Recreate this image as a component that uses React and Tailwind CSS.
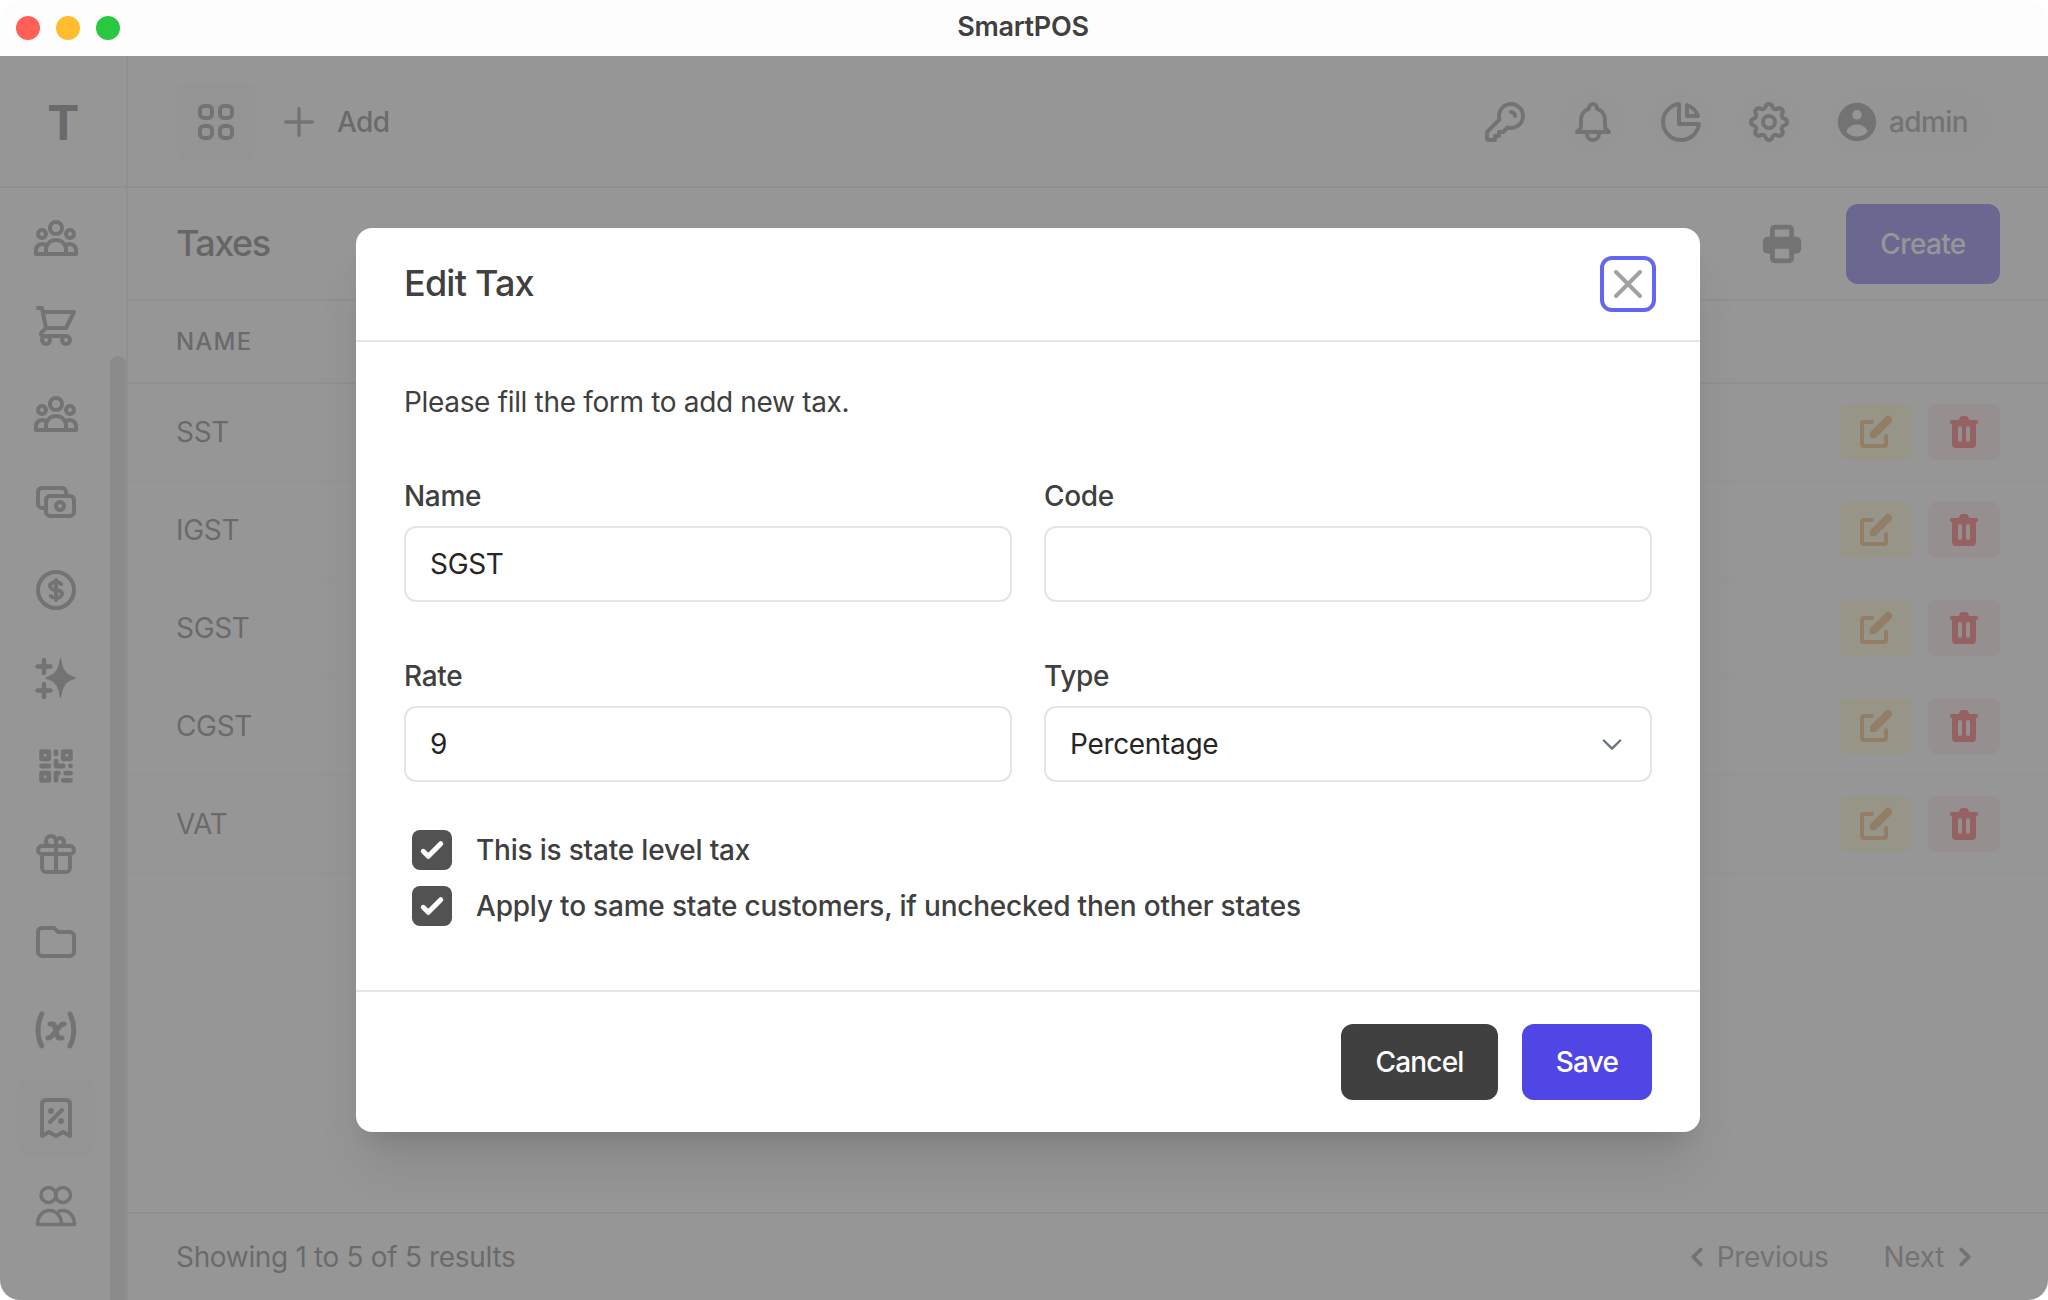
import {
  HiOutlineUserGroup,
  HiOutlineShoppingCart,
  HiOutlineCash,
  HiOutlineCurrencyDollar,
  HiQrcode,
  HiOutlineGift,
  HiOutlineFolder,
  HiOutlineVariable,
  HiOutlineReceiptTax,
  HiOutlineViewGrid,
  HiOutlinePlus,
  HiOutlineKey,
  HiOutlineBell,
  HiOutlineChartPie,
  HiOutlineCog,
  HiUserCircle,
  HiPrinter,
  HiPencilAlt,
  HiTrash,
  HiOutlineX,
  HiOutlineChevronDown,
  HiChevronLeft,
  HiChevronRight,
} from 'react-icons/hi';

const SparkIcon = ({ className }) => (
  <svg viewBox="0 0 48 48" fill="currentColor" className={className}>
    <path d="M28.5 5C30 16 33 21 43 24 33 27 30 32 28.5 43 27 32 24 27 14 24 24 21 27 16 28.5 5Z" strokeWidth="1.5" stroke="currentColor" strokeLinejoin="round" />
    <path d="M12 6v13M5.5 12.5h13M12 30v13M5.5 36.5h13" stroke="currentColor" strokeWidth="4.5" strokeLinecap="round" />
  </svg>
);

const TeamIcon = ({ className }) => (
  <svg viewBox="0 0 48 48" fill="none" stroke="currentColor" strokeWidth="3.5" strokeLinejoin="round" className={className}>
    <circle cx="16.5" cy="13" r="7.5" />
    <circle cx="31" cy="13" r="7.5" />
    <path d="M5.5 42.5c0-8 5-14 12-14s12 6 12 14z" />
    <path d="M26 29.5c1.5-.7 3-1 4.5-1 7 0 12 6 12 14H29.5" />
  </svg>
);

const navItems = [
  { icon: HiOutlineUserGroup },
  { icon: HiOutlineShoppingCart },
  { icon: HiOutlineUserGroup },
  { icon: HiOutlineCash },
  { icon: HiOutlineCurrencyDollar },
  { icon: SparkIcon },
  { icon: HiQrcode },
  { icon: HiOutlineGift },
  { icon: HiOutlineFolder },
  { icon: HiOutlineVariable, heavy: true },
  { icon: HiOutlineReceiptTax, active: true },
  { icon: TeamIcon },
];

const taxes = ['SST', 'IGST', 'SGST', 'CGST', 'VAT'];

const Sidebar = () => (
  <aside className="relative flex w-[128px] shrink-0 flex-col border-r-2 border-neutral-200">
    <div className="flex h-[132px] items-center justify-center border-b-2 border-neutral-200 pt-[4px] text-[48px] font-bold text-neutral-600">
      T
    </div>
    <nav className="flex flex-col items-center pt-[6px] pr-[14px]">
      {navItems.map((item, i) => (
        <div key={i} className="flex h-[88px] items-center justify-center">
          <div
            className={`flex h-[78px] w-[78px] items-center justify-center rounded-xl ${
              item.active ? 'bg-neutral-100' : ''
            }`}
          >
            <item.icon
              className={`h-[48px] w-[48px] text-neutral-500 ${item.heavy ? '[&_path]:[stroke-width:2.5]' : ''}`}
            />
          </div>
        </div>
      ))}
    </nav>
    <div className="absolute top-[300px] right-0 bottom-0 w-[16px] rounded-t-full bg-neutral-300" />
  </aside>
);

const Topbar = () => (
  <header className="flex h-[132px] shrink-0 items-center justify-between border-b-2 border-neutral-200 pt-[2px] pr-[56px] pl-[48px]">
    <div className="flex items-center">
      <div className="flex h-[78px] w-[80px] items-center justify-center rounded-xl bg-neutral-100">
        <HiOutlineViewGrid className="h-[48px] w-[48px] text-neutral-500" />
      </div>
      <HiOutlinePlus className="ml-[23px] h-[40px] w-[40px] text-neutral-500" />
      <span className="ml-[18px] text-[28px] font-medium tracking-[-0.6px] text-neutral-600">Add</span>
    </div>
    <div className="flex items-center gap-[24px]">
      <span className="flex h-[64px] w-[64px] items-center justify-center">
        <HiOutlineKey className="h-[48px] w-[48px] text-neutral-500" />
      </span>
      <span className="flex h-[64px] w-[64px] items-center justify-center rounded-full bg-neutral-50">
        <HiOutlineBell className="h-[48px] w-[48px] text-neutral-500" />
      </span>
      <span className="flex h-[64px] w-[64px] items-center justify-center rounded-full bg-neutral-50">
        <HiOutlineChartPie className="h-[48px] w-[48px] text-neutral-500" />
      </span>
      <span className="flex h-[64px] w-[64px] items-center justify-center rounded-full bg-neutral-50">
        <HiOutlineCog className="h-[48px] w-[48px] text-neutral-500" />
      </span>
      <div className="ml-[2px] flex h-[64px] items-center gap-[8px] rounded-full bg-neutral-50 pr-[24px] pl-[6px]">
        <HiUserCircle className="h-[48px] w-[48px] text-neutral-500" />
        <span className="text-[28px] font-medium tracking-[-0.6px] text-neutral-500">admin</span>
      </div>
    </div>
  </header>
);

const TaxTable = () => (
  <div className="flex min-h-0 flex-1 flex-col">
    <div className="flex h-[113px] shrink-0 items-center justify-between border-b-2 border-neutral-200 px-[48px]">
      <h1 className="pb-[2px] text-[36px] font-medium tracking-[-1.5px] text-neutral-700">Taxes</h1>
      <div className="flex items-center gap-[40px]">
        <HiPrinter className="h-[48px] w-[48px] text-neutral-500" />
        <button className="h-[80px] w-[154px] rounded-xl bg-[#4f46e5] text-[28px] font-medium tracking-[-0.65px] text-white">
          Create
        </button>
      </div>
    </div>
    <div className="flex h-[83px] shrink-0 items-center border-b-2 border-neutral-200 pl-[48px] text-[24px] font-medium tracking-wider text-neutral-600">
      NAME
    </div>
    {taxes.map((name) => (
      <div
        key={name}
        className="flex h-[98px] shrink-0 items-center justify-between border-b-2 border-neutral-100 px-[48px]"
      >
        <span className="text-[28px] text-neutral-600">{name}</span>
        <div className="flex gap-[16px]">
          <button className="flex h-[56px] w-[72px] items-center justify-center rounded-lg bg-yellow-100">
            <HiPencilAlt className="h-[40px] w-[40px] text-[#f0a040]" />
          </button>
          <button className="flex h-[56px] w-[72px] items-center justify-center rounded-lg bg-red-100">
            <HiTrash className="h-[40px] w-[40px] text-red-500" />
          </button>
        </div>
      </div>
    ))}
    <footer className="mt-auto flex h-[88px] shrink-0 items-center justify-between border-t-2 border-neutral-200 pr-[64px] pl-[48px]">
      <span className="text-[28px] text-neutral-600">Showing 1 to 5 of 5 results</span>
      <div className="flex items-center text-[28px] text-neutral-500">
        <HiChevronLeft className="h-[38px] w-[38px]" />
        <span className="ml-[1px]">Previous</span>
        <span className="ml-[55px]">Next</span>
        <HiChevronRight className="ml-[2px] h-[38px] w-[38px]" />
      </div>
    </footer>
  </div>
);

const Field = ({ label, children }) => (
  <div>
    <label className="mb-[10px] block text-[28px] leading-[40px] font-medium text-neutral-700">{label}</label>
    {children}
  </div>
);

const TextBox = ({ value }) => (
  <div className="flex h-[76px] items-center rounded-xl border-2 border-neutral-200 px-[24px] text-[28px] text-neutral-800">
    {value}
  </div>
);

const Check = ({ label }) => (
  <div className="flex h-[40px] items-center">
    <span className="ml-[8px] flex h-[40px] w-[40px] items-center justify-center rounded-lg bg-neutral-600">
      <svg viewBox="0 0 16 16" fill="white" className="h-[40px] w-[40px]">
        <path d="M12.207 4.793a1 1 0 010 1.414l-5 5a1 1 0 01-1.414 0l-2-2a1 1 0 011.414-1.414L6.5 9.086l4.293-4.293a1 1 0 011.414 0z" />
      </svg>
    </span>
    <span className="ml-[24px] text-[28px] font-medium tracking-[-0.2px] text-neutral-700">{label}</span>
  </div>
);

const EditDialog = () => (
  <div className="absolute inset-0 bg-neutral-500/75 pt-[172px] pl-[356px]">
    <div className="flex h-[904px] w-[1344px] flex-col rounded-2xl bg-white shadow-[0_40px_50px_-10px_rgba(0,0,0,0.1),0_16px_20px_-12px_rgba(0,0,0,0.1)]">
      <div className="flex h-[114px] shrink-0 items-center justify-between border-b-2 border-neutral-200 pr-[44px] pl-[48px]">
        <h2 className="pb-[2px] text-[36px] font-medium tracking-[-0.8px] text-neutral-700">Edit Tax</h2>
        <button className="flex h-[56px] w-[56px] items-center justify-center rounded-xl border-4 border-[#6366f1] text-neutral-400">
          <HiOutlineX className="h-[48px] w-[48px]" />
        </button>
      </div>
      <div className="flex-1 px-[48px] pt-[40px]">
        <p className="text-[28px] leading-[40px] text-neutral-700">Please fill the form to add new tax.</p>
        <div className="mt-[54px] grid grid-cols-2 gap-x-[32px] gap-y-[54px]">
          <Field label="Name">
            <TextBox value="SGST" />
          </Field>
          <Field label="Code">
            <TextBox value="" />
          </Field>
          <Field label="Rate">
            <TextBox value="9" />
          </Field>
          <Field label="Type">
            <div className="flex h-[76px] items-center justify-between rounded-xl border-2 border-neutral-200 px-[24px] text-[28px] text-neutral-800">
              Percentage
              <HiOutlineChevronDown className="h-[28px] w-[28px] text-gray-500" />
            </div>
          </Field>
        </div>
        <div className="mt-[48px] flex flex-col gap-[16px]">
          <Check label="This is state level tax" />
          <Check label="Apply to same state customers, if unchecked then other states" />
        </div>
      </div>
      <div className="flex h-[142px] shrink-0 items-center justify-end gap-[24px] border-t-2 border-neutral-200 px-[48px]">
        <button className="h-[76px] w-[157px] rounded-xl bg-neutral-700 text-[28px] font-medium tracking-[-0.8px] text-white">
          Cancel
        </button>
        <button className="h-[76px] w-[130px] rounded-xl bg-[#4f46e5] text-[28px] font-medium tracking-[-0.8px] text-white">
          Save
        </button>
      </div>
    </div>
  </div>
);

export default function App() {
  return (
    <div className="relative h-[1300px] w-[2048px] overflow-hidden bg-white font-['Inter',sans-serif] tracking-[-0.33px]">
      <div className="relative z-10 flex h-[56px] items-center justify-center rounded-t-[20px] bg-[#fdfdfd] pr-[2px] pb-[2px]">
        <div className="absolute top-[16px] left-[16px] flex gap-[16px]">
          <span className="h-[24px] w-[24px] rounded-full bg-[#ff5f57]" />
          <span className="h-[24px] w-[24px] rounded-full bg-[#febc2e]" />
          <span className="h-[24px] w-[24px] rounded-full bg-[#28c840]" />
        </div>
        <span className="text-[27px] font-semibold text-neutral-700">SmartPOS</span>
      </div>
      <div className="relative h-[1244px] overflow-hidden rounded-b-[20px]">
        <div className="flex h-full bg-white">
          <Sidebar />
          <main className="flex min-w-0 flex-1 flex-col">
            <Topbar />
            <TaxTable />
          </main>
        </div>
        <EditDialog />
      </div>
    </div>
  );
}
